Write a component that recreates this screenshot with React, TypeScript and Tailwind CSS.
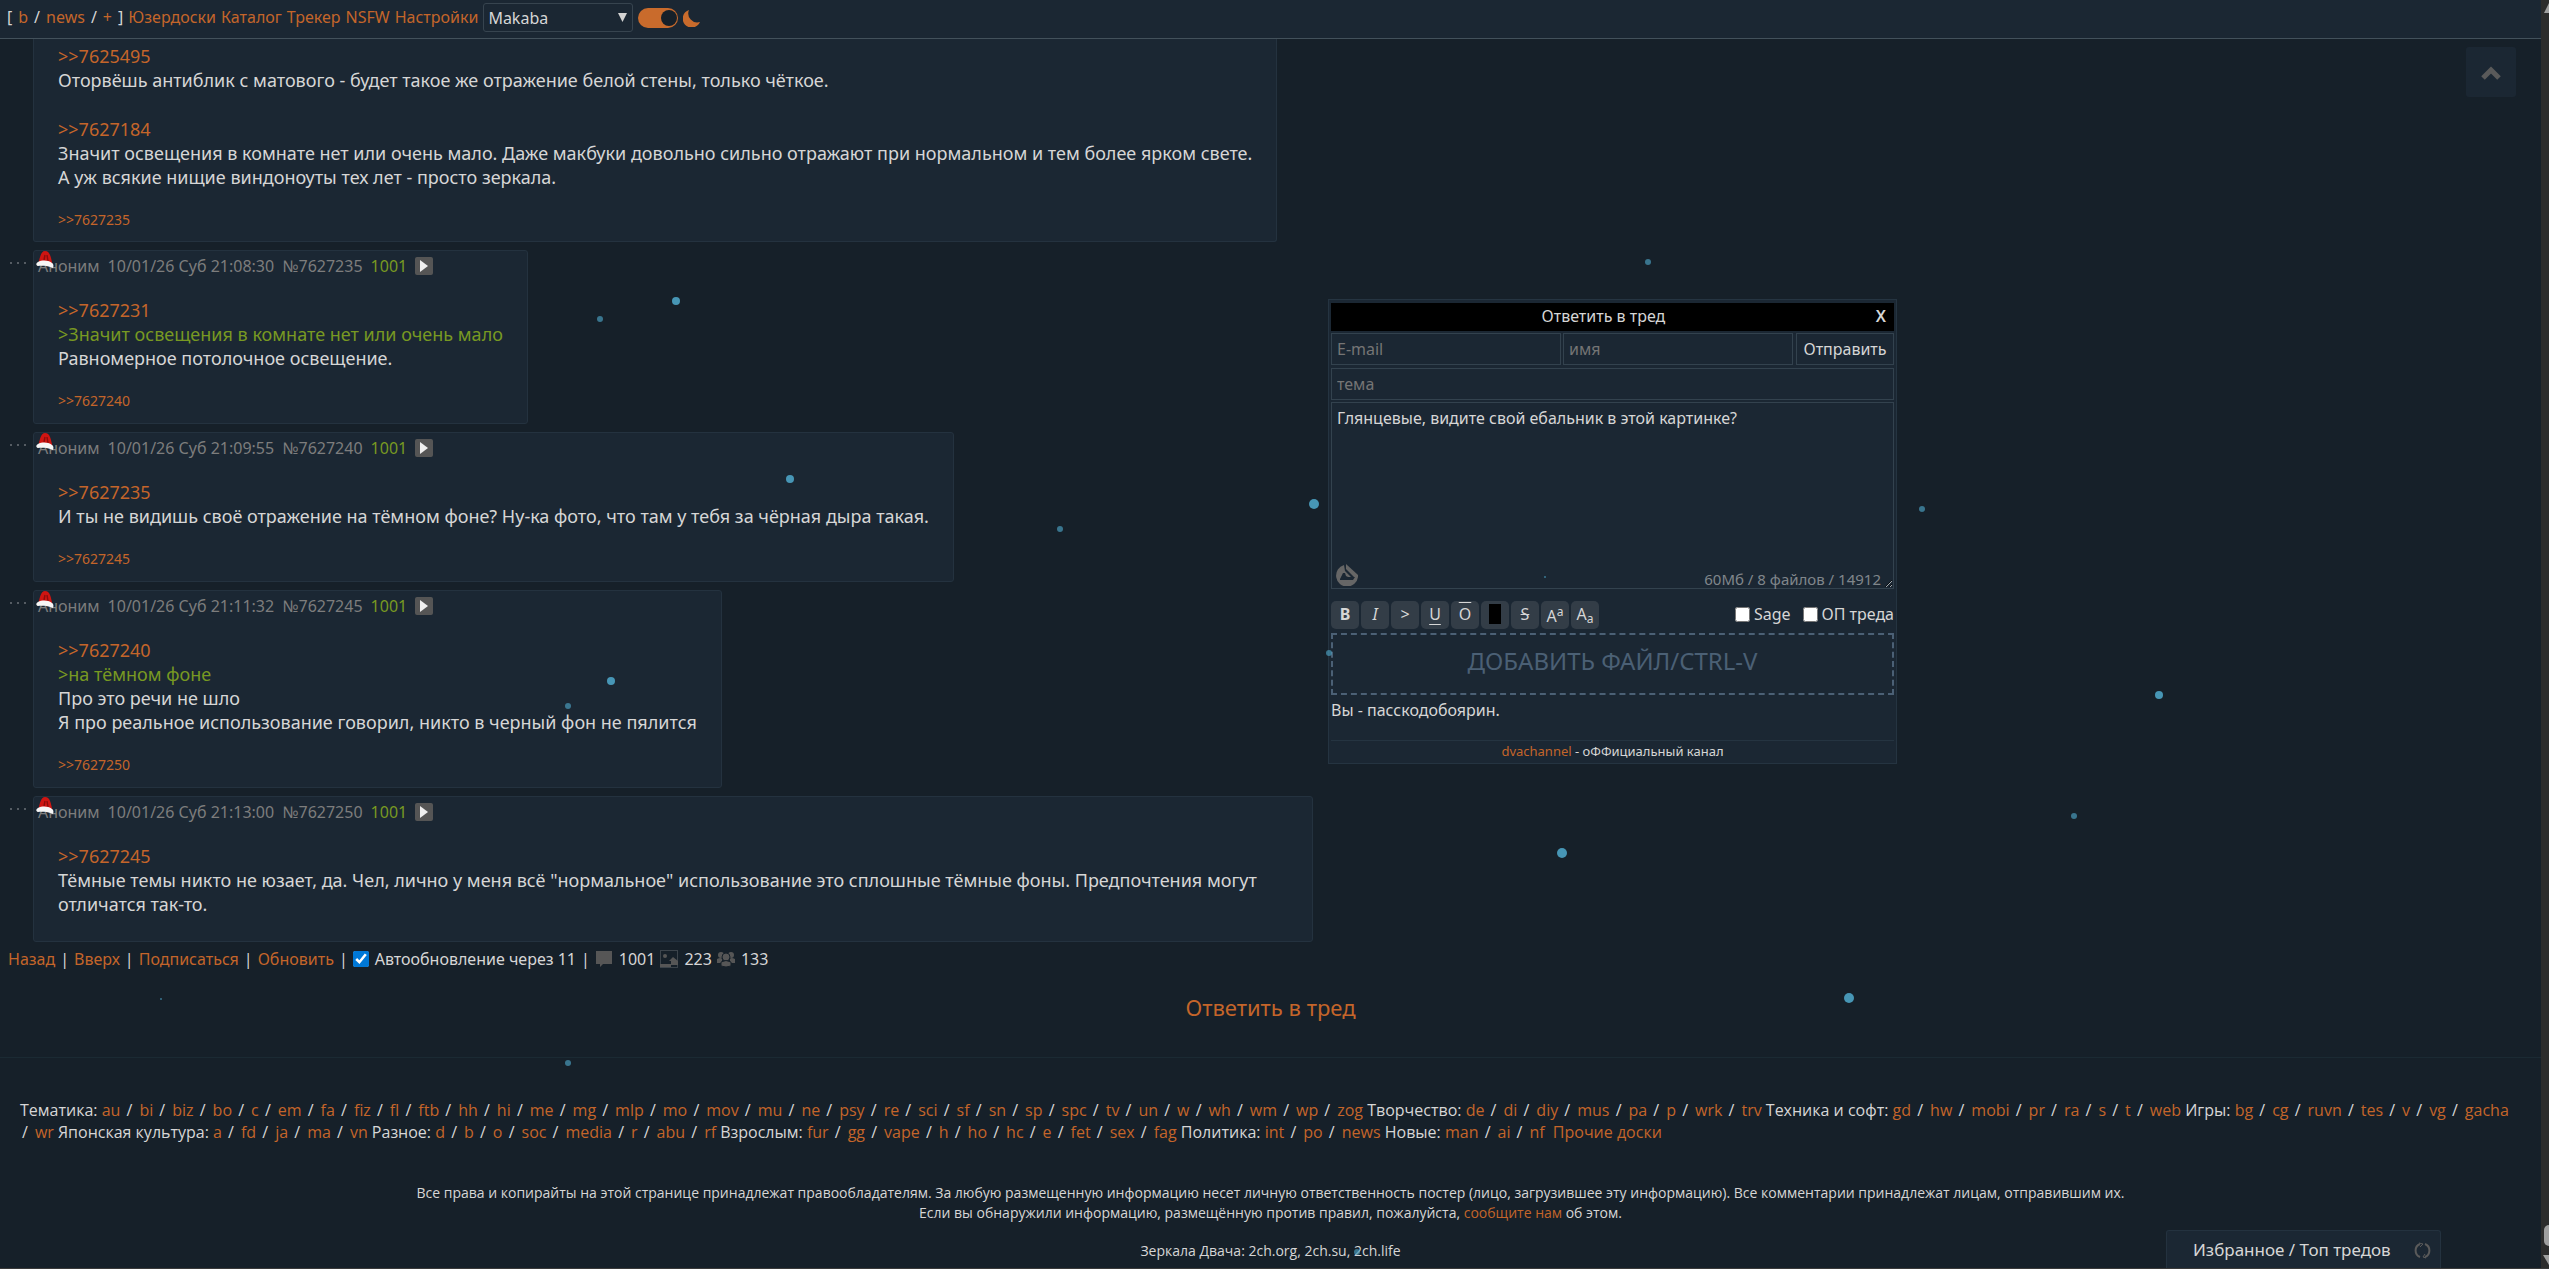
import React, { useState } from "react";

interface Post {
  id: string;
  time: string;
  lines: { kind: "ref" | "quote" | "text"; text: string }[];
  replies: string[];
}

const POSTS: Post[] = [
  {
    id: "7627235",
    time: "21:08:30",
    lines: [
      { kind: "ref", text: ">>7627231" },
      { kind: "quote", text: ">Значит освещения в комнате нет или очень мало" },
      { kind: "text", text: "Равномерное потолочное освещение." },
    ],
    replies: ["7627240"],
  },
  {
    id: "7627240",
    time: "21:09:55",
    lines: [
      { kind: "ref", text: ">>7627235" },
      { kind: "text", text: "И ты не видишь своё отражение на тёмном фоне? Ну-ка фото, что там у тебя за чёрная дыра такая." },
    ],
    replies: ["7627245"],
  },
  {
    id: "7627245",
    time: "21:11:32",
    lines: [
      { kind: "ref", text: ">>7627240" },
      { kind: "quote", text: ">на тёмном фоне" },
      { kind: "text", text: "Про это речи не шло" },
      { kind: "text", text: "Я про реальное использование говорил, никто в черный фон не пялится" },
    ],
    replies: ["7627250"],
  },
  {
    id: "7627250",
    time: "21:13:00",
    lines: [
      { kind: "ref", text: ">>7627245" },
      {
        kind: "text",
        text: 'Тёмные темы никто не юзает, да. Чел, лично у меня всё "нормальное" использование это сплошные тёмные фоны. Предпочтения могут отличатся так-то.',
      },
    ],
    replies: [],
  },
];

const BOARDS: { title: string; boards: string }[] = [
  {
    title: "Тематика",
    boards:
      "au bi biz bo c em fa fiz fl ftb hh hi me mg mlp mo mov mu ne psy re sci sf sn sp spc tv un w wh wm wp zog",
  },
  { title: "Творчество", boards: "de di diy mus pa p wrk trv" },
  { title: "Техника и софт", boards: "gd hw mobi pr ra s t web" },
  { title: "Игры", boards: "bg cg ruvn tes v vg gacha wr" },
  { title: "Японская культура", boards: "a fd ja ma vn" },
  { title: "Разное", boards: "d b o soc media r abu rf" },
  { title: "Взрослым", boards: "fur gg vape h ho hc e fet sex fag" },
  { title: "Политика", boards: "int po news" },
  { title: "Новые", boards: "man ai nf" },
];

// x, y, radius
const SNOW: [number, number, number][] = [
  [676, 301, 4], [600, 319, 3], [1648, 262, 3], [790, 479, 4], [1060, 529, 3], [1314, 504, 5],
  [1922, 509, 3], [611, 681, 4], [568, 706, 3], [2159, 695, 4], [1329, 653, 3], [1545, 577, 1],
  [2074, 816, 3], [1562, 853, 5], [161, 999, 1], [1849, 998, 5], [568, 1063, 3], [1357, 1252, 3],
];

function Link({ children, className = "" }: { children: React.ReactNode; className?: string }) {
  return (
    <a href="#" className={`text-[#c4652a] hover:text-[#da8253] ${className}`}>
      {children}
    </a>
  );
}

function SantaHat() {
  return (
    <svg className="absolute left-[2px] top-0 h-[18px] w-[18px]" viewBox="0 0 18 18" aria-hidden="true">
      <path d="M2.500 12 C4 6 5 0 9 0 C14 0 15 6 16.500 14 Z" fill="#cf1512" />
      <path d="M9 4 L8 9 M11 4 L12 10" stroke="#8d0c0c" strokeWidth="1.4" fill="none" />
      <path d="M2 11 C6 9 12 9 16 12 C18 13 17.500 16 17 17 C12 14.500 6 14.500 2 15 C-0.500 14.500 0 12 2 11 Z" fill="#f6f6f6" />
    </svg>
  );
}

function PostLine({ kind, text }: Post["lines"][number]) {
  if (kind === "ref") return <p><Link>{text}</Link></p>;
  if (kind === "quote") return <p className="text-[#789922]">{text}</p>;
  return <p>{text}</p>;
}

function Replies({ ids }: { ids: string[] }) {
  return (
    <div className="mt-[21px] text-sm leading-5">
      {ids.map(id => (
        <Link key={id}>&gt;&gt;{id}</Link>
      ))}
    </div>
  );
}

function PostCard({ post }: { post: Post }) {
  return (
    <div className="flex items-start">
      <button type="button" aria-label="Меню поста" className="flex w-[25px] shrink-0 gap-[5px] pl-[2px] pt-3">
        <span className="size-[2px] bg-[#555c63]" />
        <span className="size-[2px] bg-[#555c63]" />
        <span className="size-[2px] bg-[#555c63]" />
      </button>
      <article className="relative w-fit max-w-[1280px] rounded-[3px] border border-[#24323f] bg-[#1b2733] pt-[3px]">
        <div className="flex items-center gap-2 px-1 text-base leading-6 text-[#7d7d7d]">
          <span>Аноним</span>
          <span>10/01/26 Суб {post.time}</span>
          <a href="#">№{post.id}</a>
          <span className="text-[#789922]">1001</span>
          <button type="button" aria-label="Развернуть" className="grid size-[18px] place-items-center rounded-xs bg-[#555]">
            <svg className="h-3 w-2" viewBox="0 0 8 12" aria-hidden="true">
              <path d="M0 0 L8 6 L0 12 Z" fill="#eee" />
            </svg>
          </button>
        </div>
        <SantaHat />
        <div className={`mt-5 px-6 text-lg leading-6 ${post.replies.length ? "pb-3" : "pb-[25px]"}`}>
          {post.lines.map(line => (
            <PostLine key={line.text} {...line} />
          ))}
          {post.replies.length > 0 && <Replies ids={post.replies} />}
        </div>
      </article>
    </div>
  );
}

function Header() {
  const [dark, setDark] = useState(true);
  return (
    <header className="sticky top-0 z-20 flex h-[39px] items-start gap-[5px] border-b border-[#43515b] bg-[#1b2733] pl-[7px] pt-[3px] leading-[29px]">
      <nav className="flex gap-[5px]">
        <span className="flex gap-[6px]">
          [ <Link>b</Link> / <Link>news</Link> / <Link>+</Link> ]
        </span>
        <Link>Юзердоски</Link>
        <Link>Каталог</Link>
        <Link>Трекер</Link>
        <Link>NSFW</Link>
        <Link>Настройки</Link>
      </nav>
      <div className="relative">
        <select
          aria-label="Стиль"
          className="h-[29px] w-[150px] appearance-none rounded-[3px] border border-[#37444f] bg-[#1b2733] pl-1"
        >
          <option>Makaba</option>
        </select>
        <svg className="pointer-events-none absolute right-[6px] top-[10px] h-[9px] w-[9px]" viewBox="0 0 9 9" aria-hidden="true">
          <path d="M0 0 H9 L4.500 9 Z" fill="#d3d3d3" />
        </svg>
      </div>
      <button
        type="button"
        role="switch"
        aria-checked={dark}
        aria-label="Тёмная тема"
        onClick={() => setDark(!dark)}
        className={`mt-[5px] flex h-5 w-10 items-center rounded-full bg-[#c96b2c] px-[1px] ${dark ? "justify-end" : "justify-start"}`}
      >
        <span className="size-4 rounded-full bg-[#162029]" />
      </button>
      <svg className="mt-[6px] size-[18px]" viewBox="0 0 18 18" aria-hidden="true">
        <path d="M6 1 A9 9 0 1 0 17 13 A9 9 0 0 1 6 1 Z" fill="#c96b2c" />
      </svg>
    </header>
  );
}

function StatusBar() {
  return (
    <div className="mt-[5px] flex items-center gap-[5px] pl-2 leading-6">
      <Link>Назад</Link>|<Link>Вверх</Link>|<Link>Подписаться</Link>|<Link>Обновить</Link>|
      <label className="flex items-center gap-[6px]">
        <input type="checkbox" defaultChecked className="size-4 accent-[#0078d7]" />
        Автообновление через 11
      </label>
      |
      <span className="flex items-center gap-[6px]">
        <svg className="size-[18px]" viewBox="0 0 18 18" fill="#565656" aria-hidden="true">
          <path d="M1 1 H17 V14 H8 L5 17 V14 H1 Z" />
        </svg>
        1001
      </span>
      <span className="flex items-center gap-[6px]">
        <svg className="size-[18px]" viewBox="0 0 18 18" aria-hidden="true">
          <rect x="0.500" y="0.500" width="17" height="17" fill="none" stroke="#3c444b" />
          <circle cx="5" cy="6" r="2" fill="#565656" />
          <path d="M0 14 H11 V11 H9 L13 7 L18 11 V15 H11 V17 H0 Z" fill="#565656" />
        </svg>
        223
      </span>
      <span className="flex items-center gap-[6px]">
        <svg className="size-[18px]" viewBox="0 0 18 18" fill="#565656" aria-hidden="true">
          <circle cx="4" cy="5" r="3" />
          <circle cx="14" cy="5" r="3" />
          <path d="M0 9 Q4 7 5 9 V13 H0 Z M18 9 Q14 7 13 9 V13 H18 Z" />
          <circle cx="9" cy="7" r="4" stroke="#162029" />
          <path d="M4 12 Q9 9 14 12 V16 Q9 18 4 16 Z" stroke="#162029" />
        </svg>
        133
      </span>
    </div>
  );
}

function BoardList() {
  return (
    <nav className="mt-[41px] px-5 leading-[22px]">
      {BOARDS.map(group => (
        <React.Fragment key={group.title}>
          {group.title}:{" "}
          {group.boards.split(" ").map((board, i) => (
            <React.Fragment key={board}>
              <span className="whitespace-nowrap">
                {i > 0 && <span className="mr-[7px] pl-[2px]">/</span>}
                <Link>{board}</Link>
              </span>{" "}
            </React.Fragment>
          ))}
        </React.Fragment>
      ))}
      <Link className="ml-1">Прочие доски</Link>
    </nav>
  );
}

const FORMATS: { name: string; label: React.ReactNode }[] = [
  { name: "Жирный", label: <b>B</b> },
  { name: "Курсив", label: <i>I</i> },
  { name: "Цитата", label: ">" },
  { name: "Подчёркнутый", label: <span className="underline underline-offset-4">U</span> },
  { name: "Надчёркнутый", label: <span className="overline">O</span> },
  { name: "Спойлер", label: <span className="block h-5 w-3 bg-black" /> },
  { name: "Зачёркнутый", label: <span className="line-through">S</span> },
  { name: "Верхний индекс", label: <span className="pt-1">A<sup className="text-xs">a</sup></span> },
  { name: "Нижний индекс", label: <span>A<sub className="text-xs">a</sub></span> },
];

function ReplyForm() {
  const [text, setText] = useState("Глянцевые, видите свой ебальник в этой картинке?");
  const field = "h-8 min-w-0 border border-[#33424e] bg-[#1b2733] px-[5px] placeholder:text-[#757575]";
  return (
    <form
      className="fixed left-[1328px] top-[299px] z-30 flex w-[569px] flex-col border border-[#253441] bg-[#1b2733] px-[2px] pt-[3px]"
      onSubmit={event => event.preventDefault()}
    >
      <div className="flex h-7 items-center bg-black pb-[2px] pr-2">
        <span className="flex-1 text-center">Ответить в тред</span>
        <button type="button" aria-label="Закрыть" className="font-semibold">X</button>
      </div>
      <div className="mt-[2px] flex gap-[2px]">
        <input className={`${field} flex-1`} placeholder="E-mail" aria-label="E-mail" />
        <input className={`${field} flex-1`} placeholder="имя" aria-label="имя" />
        <button type="submit" className="ml-[1px] h-8 w-[98px] border border-[#33424e]">Отправить</button>
      </div>
      <input className={`${field} mt-[3px]`} placeholder="тема" aria-label="тема" />
      <div className="relative mt-[2px] flex">
        <textarea
          aria-label="Комментарий"
          className="h-[187px] w-full border border-[#33424e] px-[5px] pt-[3px] leading-6"
          value={text}
          onChange={event => setText(event.target.value)}
        />
        <svg className="absolute bottom-[3px] left-[5px] size-[22px]" viewBox="0 0 22 22" aria-hidden="true">
          <path d="M8 1 A11 11 0 1 0 22 13 H15 L9 7 Z" fill="#666" />
          <path d="M10 0 L22 11 V13 H18 L10 5 Z" fill="#666" />
          <path d="M4 15 L7 9 H9 L10 12 L12 13 H19 L17 16 H4 Z" fill="#1b2733" />
        </svg>
        <span className="pointer-events-none absolute bottom-0 right-[13px] text-[15px] leading-5 text-[#80868b]">
          60Мб / 8 файлов / 14912
        </span>
      </div>
      <div className="mt-3 flex items-center justify-between">
        <div className="flex gap-[2px]">
          {FORMATS.map(format => (
            <button
              key={format.name}
              type="button"
              title={format.name}
              className="flex h-7 w-7 items-center justify-center rounded-[5px] bg-[#333d47] pb-[2px] leading-6"
            >
              {format.label}
            </button>
          ))}
        </div>
        <div className="flex gap-3 pb-[2px]">
          <label className="flex items-center gap-1">
            <input type="checkbox" className="size-[15px]" />
            Sage
          </label>
          <label className="flex items-center gap-1">
            <input type="checkbox" className="size-[15px]" />
            ОП треда
          </label>
        </div>
      </div>
      <button type="button" className="mt-1 h-[62px] border-2 border-dashed border-[#4b6075] pb-[6px] text-2xl text-[#4b6075]">
        ДОБАВИТЬ ФАЙЛ/CTRL-V
      </button>
      <p className="mt-[3px] leading-6">Вы - пасскодобоярин.</p>
      <p className="mt-[18px] h-[23px] border-t border-[#253441] text-center text-[13px] leading-5">
        <Link>dvachannel</Link> - оФФициальный канал
      </p>
    </form>
  );
}

function Scrollbar() {
  return (
    <div className="flex w-2 shrink-0 justify-end bg-[#2c2c2c]" aria-hidden="true">
      <svg className="fixed bottom-0 right-0 top-0 h-full w-[6px]">
        <path d="M6 3 V13 H1 Z" fill="#9f9f9f" />
        <svg y="100%" overflow="visible">
          <rect x="1" y="-44" width="12" height="21" rx="5" fill="#9f9f9f" />
          <path d="M0 -14 H6 V-4 Z" fill="#9f9f9f" />
        </svg>
      </svg>
    </div>
  );
}

export default function App() {
  return (
    <div className="flex min-h-screen bg-[#162029] font-['Noto_Sans',sans-serif] text-base text-[#d6d6d6]">
      <div className="min-w-0 flex-1">
        <Header />
        <main>
          <div className="flex flex-col gap-2 pl-2">
            <article className="ml-[25px] w-fit max-w-[1280px] rounded-b-[3px] border border-t-0 border-[#24323f] bg-[#1b2733] px-6 pb-[11px] pt-[5px] text-lg leading-6">
              <PostLine kind="ref" text=">>7625495" />
              <PostLine kind="text" text="Оторвёшь антиблик с матового - будет такое же отражение белой стены, только чёткое." />
              <div className="mt-[25px]">
                <PostLine kind="ref" text=">>7627184" />
                <PostLine
                  kind="text"
                  text="Значит освещения в комнате нет или очень мало. Даже макбуки довольно сильно отражают при нормальном и тем более ярком свете."
                />
                <PostLine kind="text" text="А уж всякие нищие виндоноуты тех лет - просто зеркала." />
              </div>
              <Replies ids={["7627235"]} />
            </article>
            {POSTS.map(post => (
              <PostCard key={post.id} post={post} />
            ))}
          </div>
          <StatusBar />
          <div className="mt-5 text-center text-[22px] leading-8">
            <Link>Ответить в тред</Link>
          </div>
          <hr className="mt-[34px] border-[#1b2a33]" />
        </main>
        <footer className="font-['Open_Sans',sans-serif]">
          <BoardList />
          <div className="mt-10 text-center text-sm leading-5">
            <p>
              Все права и копирайты на этой странице принадлежат правообладателям. За любую размещенную информацию несет
              личную ответственность постер (лицо, загрузившее эту информацию). Все комментарии принадлежат лицам,
              отправившим их.
            </p>
            <p>
              Если вы обнаружили информацию, размещённую против правил, пожалуйста, <Link>сообщите нам</Link> об этом.
            </p>
            <p className="mt-[18px]">Зеркала Двача: 2ch.org, 2ch.su, 2ch.life</p>
          </div>
        </footer>
      </div>
      <Scrollbar />

      <svg className="pointer-events-none fixed inset-0 z-40 h-full w-full" aria-hidden="true">
        {SNOW.map(([x, y, r]) => (
          <circle key={`${x}-${y}`} cx={x} cy={y} r={r} fill="#4da3c4" opacity={r > 3 ? 0.9 : 0.65} />
        ))}
      </svg>

      <a
        href="#"
        aria-label="Вверх"
        className="fixed right-[33px] top-[47px] grid size-[50px] place-items-center rounded-[3px] bg-[#1b2733]"
      >
        <svg className="mt-1 h-4 w-5 text-[#5a5a5a]" viewBox="0 0 20 16" aria-hidden="true">
          <path d="M2 12 L10 4 L18 12" fill="none" stroke="currentColor" strokeWidth="5" />
        </svg>
      </a>

      <ReplyForm />

      <div className="fixed bottom-0 right-[108px] flex h-[39px] w-[275px] items-center justify-between rounded-t-[3px] border border-b-0 border-[#24323f] bg-[#1b2733] pl-[26px] pr-[9px]">
        <span className="text-[17px]">
          <a href="#">Избранное</a> / <a href="#">Топ тредов</a>
        </span>
        <svg className="size-[17px]" viewBox="0 0 17 17" fill="none" stroke="#5a5a5a" strokeWidth="2" aria-hidden="true">
          <path d="M6 15 A7 7 0 0 1 6 2 M11 2 A7 7 0 0 1 11 15" />
          <path d="M5 1 L9 2 L6 5 M12 16 L9 15 L11 12" strokeWidth="1" />
        </svg>
      </div>
      <div className="fixed inset-x-0 bottom-0 h-px bg-[#3a3a3a]" />
    </div>
  );
}
